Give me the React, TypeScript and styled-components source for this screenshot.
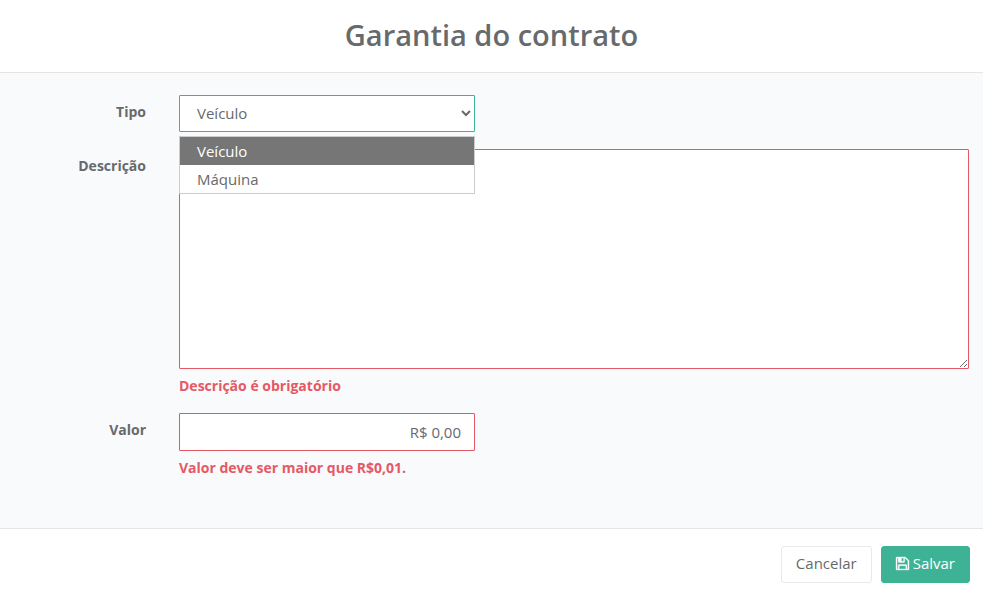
import React, { useState } from "react";
import styled, { createGlobalStyle } from "styled-components";

const GlobalStyle = createGlobalStyle`
  *, *::before, *::after { box-sizing: border-box; }
  body {
    margin: 0;
    background: #fff;
    color: #676a6c;
    font-family: "Open Sans", sans-serif;
    font-size: 14px;
    line-height: 20px;
  }
`;

const green = "#3eb294";
const red = "#e55965";

const Header = styled.header`
  padding: 15px 16px 18px;
  border-bottom: 1px solid #e5e5e5;
  text-align: center;
`;

const Title = styled.h1`
  margin: 0;
  font-size: 29px;
  font-weight: 600;
  line-height: 39px;
`;

const Body = styled.div`
  display: flex;
  flex-direction: column;
  gap: 17px;
  padding: 22px 14px 50px 0;
  background: #f9fafc;
`;

const Row = styled.div`
  display: grid;
  grid-template-columns: 146px minmax(0, 1fr);
  column-gap: 33px;
  align-items: start;
`;

const Label = styled.label`
  padding-top: 7px;
  font-weight: 700;
  text-align: right;
`;

const Field = styled.div<{ $narrow?: boolean }>`
  position: relative;
  max-width: ${(p) => (p.$narrow ? "296px" : "none")};
`;

const Select = styled.select`
  display: block;
  width: 100%;
  height: 37px;
  padding: 5px 0 7px 13px;
  border: 1px solid ${green};
  border-radius: 1px;
  outline: none;
  background: #fff;
  color: #676a6c;
  font: 15px/22px "Open Sans", sans-serif;
`;

const Options = styled.ul`
  position: absolute;
  z-index: 1;
  top: 100%;
  left: 0;
  right: 0;
  margin: 4px 0 0;
  padding: 0;
  border: 1px solid #ccc;
  background: #fff;
  list-style: none;
`;

const Option = styled.li<{ $active: boolean }>`
  padding: 3px 17px;
  background: ${(p) => (p.$active ? "#767676" : "#fff")};
  color: ${(p) => (p.$active ? "#fff" : "#676a6c")};
  font-size: 15px;
  line-height: 22px;
  cursor: default;
`;

const TextArea = styled.textarea`
  display: block;
  width: 100%;
  height: 220px;
  padding: 6px 13px;
  border: 1px solid ${red};
  border-radius: 1px;
  outline: none;
  background: #fff;
  color: #676a6c;
  font: 15px/22px "Open Sans", sans-serif;
  resize: both;
`;

const Input = styled.input`
  display: block;
  width: 100%;
  height: 38px;
  padding: 6px 13px;
  border: 1px solid ${red};
  border-radius: 1px;
  outline: none;
  background: #fff;
  color: #676a6c;
  font: 15px/22px "Open Sans", sans-serif;
  text-align: right;
`;

const ErrorText = styled.p`
  margin: 7px 0 0;
  color: ${red};
  font-weight: 700;
`;

const Footer = styled.footer`
  display: flex;
  justify-content: flex-end;
  gap: 9px;
  padding: 17px 13px 13px;
  border-top: 1px solid #e5e5e5;
`;

const Button = styled.button<{ $primary?: boolean }>`
  display: inline-flex;
  align-items: center;
  gap: 4px;
  height: 37px;
  padding: 0 14px 2px;
  border: 1px solid ${(p) => (p.$primary ? green : "#e7eaec")};
  border-radius: 3px;
  background: ${(p) => (p.$primary ? green : "#fff")};
  color: ${(p) => (p.$primary ? "#fff" : "#676a6c")};
  font: ${(p) => (p.$primary ? 500 : 400)} 15px/21px "Open Sans", sans-serif;
  cursor: pointer;
`;

const Icon = styled.svg`
  width: 13px;
  height: 13px;
  overflow: visible;
  fill: currentColor;
  stroke: currentColor;
  stroke-width: 40;
`;

const SaveIcon = () => (
  <Icon viewBox="128 128 1536 1536" aria-hidden="true">
    <path d="M512 1536h768v-384h-768v384zm896 0h128v-896q0-14-10-38.5t-20-34.5l-281-281q-10-10-34-20t-39-10v416q0 40-28 68t-68 28h-576q-40 0-68-28t-28-68v-416h-128v1280h128v-416q0-40 28-68t68-28h832q40 0 68 28t28 68v416zm-384-928v-320q0-13-9.5-22.5t-22.5-9.5h-192q-13 0-22.5 9.5t-9.5 22.5v320q0 13 9.5 22.5t22.5 9.5h192q13 0 22.5-9.5t9.5-22.5zm640 32v928q0 40-28 68t-68 28h-1344q-40 0-68-28t-28-68v-1344q0-40 28-68t68-28h928q40 0 88 20t76 48l280 280q28 28 48 76t20 88z" />
  </Icon>
);

const types = ["Veículo", "Máquina"];

export default function App() {
  const [type, setType] = useState(types[0]);

  return (
    <>
      <GlobalStyle />
      <form onSubmit={(e) => e.preventDefault()}>
        <Header>
          <Title>Garantia do contrato</Title>
        </Header>
        <Body>
          <Row>
            <Label htmlFor="tipo">Tipo</Label>
            <Field $narrow>
              <Select id="tipo" value={type} onChange={(e) => setType(e.target.value)}>
                {types.map((t) => (
                  <option key={t}>{t}</option>
                ))}
              </Select>
              <Options role="listbox" aria-label="Tipo">
                {types.map((t) => (
                  <Option
                    key={t}
                    role="option"
                    aria-selected={t === type}
                    $active={t === type}
                    onClick={() => setType(t)}
                  >
                    {t}
                  </Option>
                ))}
              </Options>
            </Field>
          </Row>
          <Row>
            <Label htmlFor="descricao">Descrição</Label>
            <Field>
              <TextArea id="descricao" aria-invalid="true" aria-describedby="descricao-erro" />
              <ErrorText id="descricao-erro">Descrição é obrigatório</ErrorText>
            </Field>
          </Row>
          <Row>
            <Label htmlFor="valor">Valor</Label>
            <Field $narrow>
              <Input id="valor" defaultValue="R$ 0,00" aria-invalid="true" aria-describedby="valor-erro" />
              <ErrorText id="valor-erro">Valor deve ser maior que R$0,01.</ErrorText>
            </Field>
          </Row>
        </Body>
        <Footer>
          <Button type="button">Cancelar</Button>
          <Button type="submit" $primary>
            <SaveIcon />
            Salvar
          </Button>
        </Footer>
      </form>
    </>
  );
}
